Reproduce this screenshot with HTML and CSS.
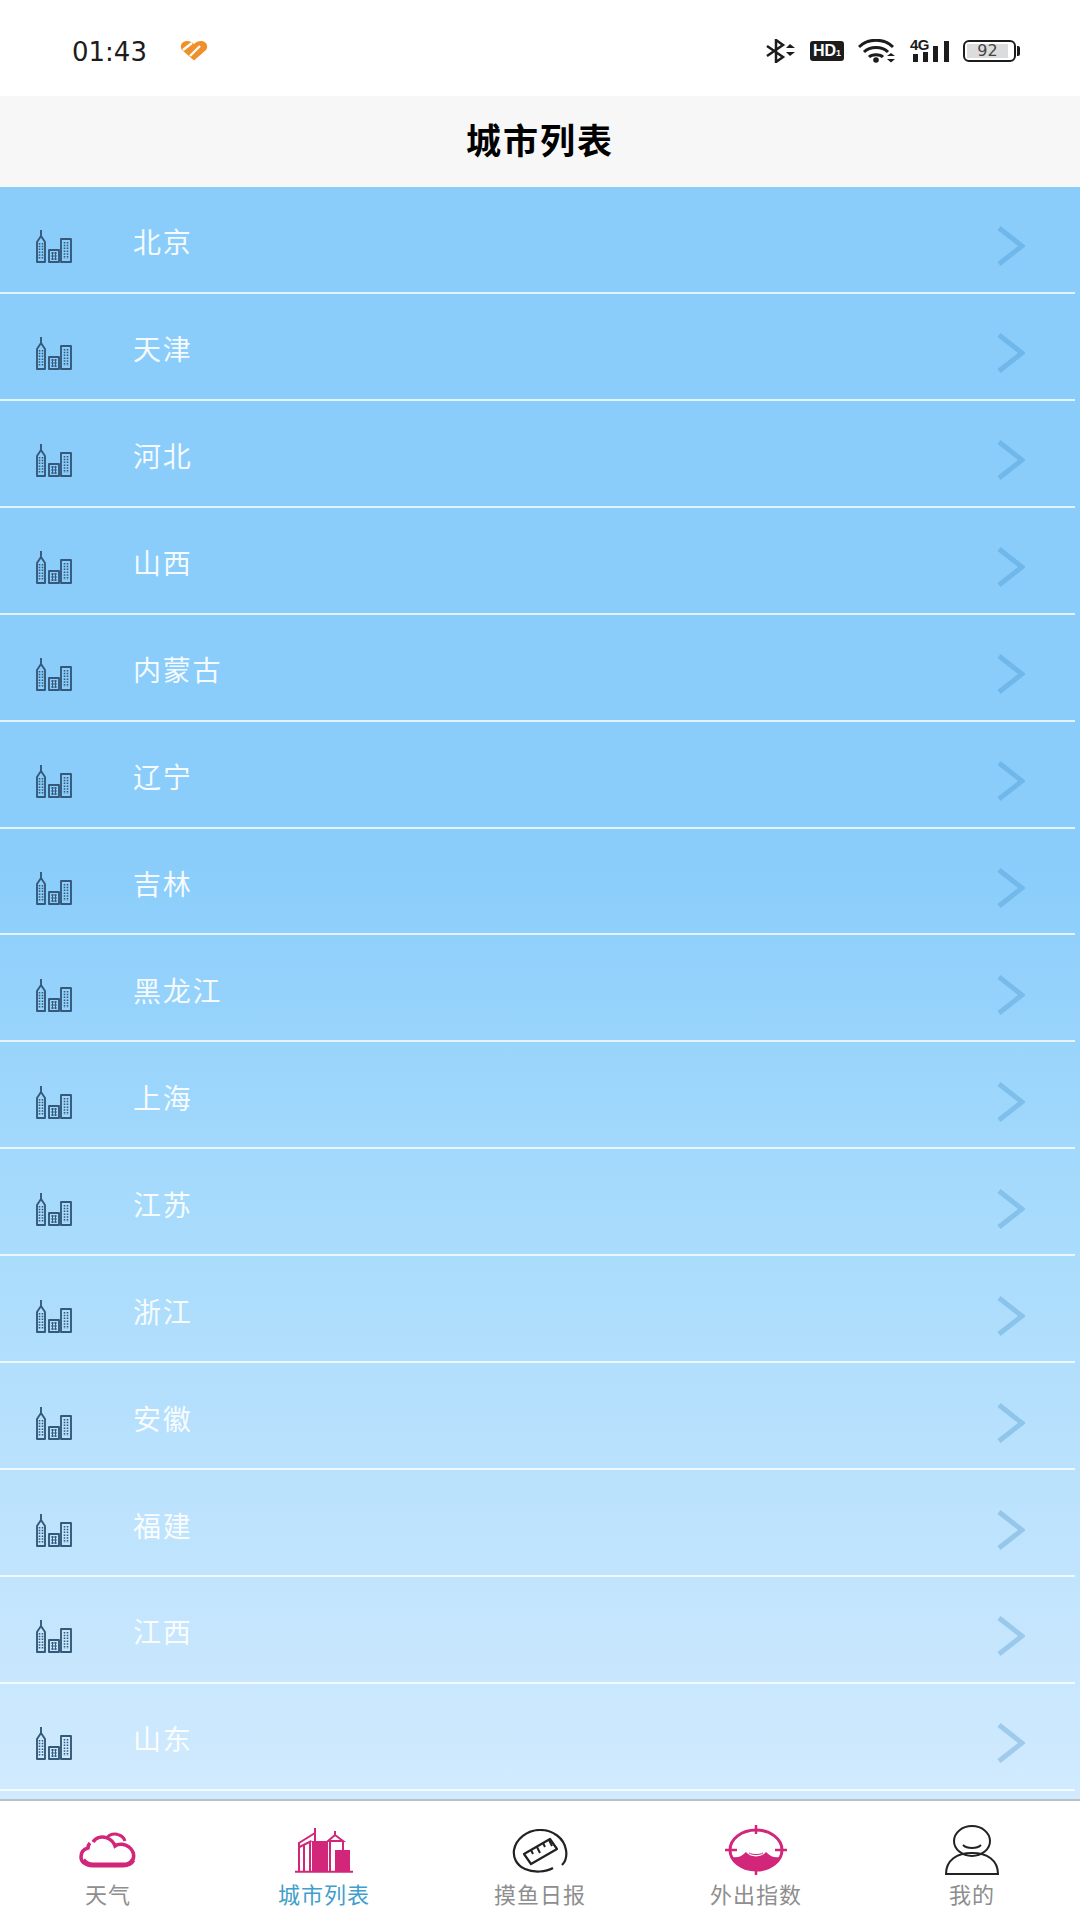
FILE: index.html
```html
<!DOCTYPE html>
<html lang="zh-CN">
<head>
    <meta charset="UTF-8">
    <meta name="viewport" content="width=device-width, initial-scale=1.0">
    <title>城市列表</title>
    <link rel="stylesheet" href="styles.css">
</head>
<body>
    <svg class="defs" width="0" height="0">
        <symbol id="city" viewBox="0 0 36 35">
            <path d="M5 1v6M1 33V13l4-6 4 6v20z M13 33V21h10v12z M25 33V10h10v23z" fill="none" stroke="#35597a" stroke-width="1.900" stroke-linejoin="round"/>
            <path d="M3.500 14v16M6.500 14v16M28.500 13v17M31.500 13v17" fill="none" stroke="#35597a" stroke-width="1.600" stroke-dasharray="1.500 1.300"/>
            <path d="M15 24h6M15 27h6M15 30h6M16.500 23v8M19.500 23v8" fill="none" stroke="#35597a" stroke-width="1"/>
        </symbol>
        <symbol id="chevron" viewBox="0 0 28 40">
            <path d="M2 2l23 18L2 38" fill="none" stroke="#3f8cc6" stroke-opacity=".32" stroke-width="5"/>
        </symbol>
    </svg>

    <div class="status-bar">
        <div class="status-left">
            <span class="time">01:43</span>
            <svg class="heart" width="28" height="20" viewBox="0 0 28 20">
                <path d="M14 19.500L2 9C-1 5 2 0 7 0c3 0 5 1 7 3 2-2 4-3 7-3 5 0 8 5 5 9z" fill="#f0902a"/>
                <path d="M3 9l9-7M10 15L20 5" stroke="#fff" stroke-width="2.400" fill="none"/>
            </svg>
        </div>
        <div class="status-right">
            <svg class="st-bt" width="30" height="24" viewBox="0 0 30 24">
                <path d="M1 7l16 11-7 5V1l7 5L1 17" fill="none" stroke="#1c1c1c" stroke-width="2.500"/>
                <path d="M20 9l4-4 5 4zM20 13h9l-5 4z" fill="#1c1c1c"/>
            </svg>
            <span class="hd">HD<small>1</small></span>
            <svg class="st-wifi" width="38" height="24" viewBox="0 0 38 24">
                <path d="M1 8c9-9 25-9 34 0M6 13c6-6 18-6 24 0M11 18c3-3 11-3 14 0" fill="none" stroke="#1c1c1c" stroke-width="3"/>
                <circle cx="18" cy="21" r="2.800" fill="#1c1c1c"/>
                <path d="M29 17l4-3 4 3zM29 20h8l-4 3.500z" fill="#1c1c1c"/>
            </svg>
            <div class="st-signal">
                <svg width="39" height="24" viewBox="0 0 39 24">
                    <path d="M3 15h5v8H3zM13 13h5v10h-5zM23 7h5v16h-5zM34 2h5v21h-5z" fill="#1c1c1c"/>
                </svg>
                <span class="net">4G</span>
            </div>
            <div class="battery"><span class="battery-level">92</span></div>
        </div>
    </div>

    <header class="title-bar">城市列表</header>

    <ul class="city-list">
        <li class="city-row"><svg class="city-icon"><use href="#city"/></svg><span class="city-name">北京</span><svg class="arrow"><use href="#chevron"/></svg></li>
        <li class="city-row"><svg class="city-icon"><use href="#city"/></svg><span class="city-name">天津</span><svg class="arrow"><use href="#chevron"/></svg></li>
        <li class="city-row"><svg class="city-icon"><use href="#city"/></svg><span class="city-name">河北</span><svg class="arrow"><use href="#chevron"/></svg></li>
        <li class="city-row"><svg class="city-icon"><use href="#city"/></svg><span class="city-name">山西</span><svg class="arrow"><use href="#chevron"/></svg></li>
        <li class="city-row"><svg class="city-icon"><use href="#city"/></svg><span class="city-name">内蒙古</span><svg class="arrow"><use href="#chevron"/></svg></li>
        <li class="city-row"><svg class="city-icon"><use href="#city"/></svg><span class="city-name">辽宁</span><svg class="arrow"><use href="#chevron"/></svg></li>
        <li class="city-row"><svg class="city-icon"><use href="#city"/></svg><span class="city-name">吉林</span><svg class="arrow"><use href="#chevron"/></svg></li>
        <li class="city-row"><svg class="city-icon"><use href="#city"/></svg><span class="city-name">黑龙江</span><svg class="arrow"><use href="#chevron"/></svg></li>
        <li class="city-row"><svg class="city-icon"><use href="#city"/></svg><span class="city-name">上海</span><svg class="arrow"><use href="#chevron"/></svg></li>
        <li class="city-row"><svg class="city-icon"><use href="#city"/></svg><span class="city-name">江苏</span><svg class="arrow"><use href="#chevron"/></svg></li>
        <li class="city-row"><svg class="city-icon"><use href="#city"/></svg><span class="city-name">浙江</span><svg class="arrow"><use href="#chevron"/></svg></li>
        <li class="city-row"><svg class="city-icon"><use href="#city"/></svg><span class="city-name">安徽</span><svg class="arrow"><use href="#chevron"/></svg></li>
        <li class="city-row"><svg class="city-icon"><use href="#city"/></svg><span class="city-name">福建</span><svg class="arrow"><use href="#chevron"/></svg></li>
        <li class="city-row"><svg class="city-icon"><use href="#city"/></svg><span class="city-name">江西</span><svg class="arrow"><use href="#chevron"/></svg></li>
        <li class="city-row"><svg class="city-icon"><use href="#city"/></svg><span class="city-name">山东</span><svg class="arrow"><use href="#chevron"/></svg></li>
    </ul>

    <nav class="tab-bar">
        <div class="tab">
            <div class="tab-icon">
                <svg class="icon-cloud" width="58" height="36" viewBox="0 0 58 36">
                    <path d="M14 10c3-5 9-6 14-4 5 2 7 5 8 8 4-3 10-2 14 1 5 4 6 10 3 14-2 3-5 4-9 4H12C6 33 2 30 2 25c0-5 3-8 7-9 0-2 1-4 2-5" fill="none" stroke="#d2267a" stroke-width="3.500"/>
                    <path d="M4 28c3 4 6 5 10 5h30c4 0 8-1 10-5" fill="none" stroke="#d2267a" stroke-width="5"/>
                    <path d="M28 6c2-4 8-5 12-3 3 1 5 3 6 6" fill="none" stroke="#d2267a" stroke-width="3"/>
                </svg>
            </div>
            <span class="tab-label">天气</span>
        </div>
        <div class="tab active">
            <div class="tab-icon">
                <svg width="58" height="46" viewBox="0 0 58 46">
                    <path d="M0 44.800h58" stroke="#d2267a" stroke-width="2"/>
                    <path d="M4 45V16l16-10M4.500 20l12-6M9 45V17M15 45V15" fill="none" stroke="#d2267a" stroke-width="2"/>
                    <path d="M20 1v13" stroke="#d2267a" stroke-width="2"/>
                    <path d="M17 14h16v31H17z" fill="#d2267a"/>
                    <path d="M33 14l7-6 8 6H33zM35 14v31M48 14v9M40 4v4" fill="none" stroke="#d2267a" stroke-width="2"/>
                    <path d="M40 23h15v22H40z" fill="#d2267a"/>
                </svg>
            </div>
            <span class="tab-label">城市列表</span>
        </div>
        <div class="tab">
            <div class="tab-icon">
                <svg width="56" height="44" viewBox="0 0 56 44">
                    <path d="M41 39C34 43 22 44 13 40 4 36 1 28 2 21 4 10 15 1 28 1c13 0 24 8 26 20 1 6-1 12-4 15" fill="none" stroke="#222" stroke-width="2.200"/>
                    <path d="M12 25L38 10l7 10-26 15z" fill="none" stroke="#222" stroke-width="2.200" stroke-linejoin="round"/>
                    <path d="M19 21l2 4M25 18l3 6M31 14l2 4M37 11l3 6" fill="none" stroke="#222" stroke-width="2"/>
                </svg>
            </div>
            <span class="tab-label">摸鱼日报</span>
        </div>
        <div class="tab">
            <div class="tab-icon">
                <svg class="icon-tall" width="62" height="50" viewBox="0 0 62 50">
                    <path d="M7 32q5 1 9-1 3-2 5-4 3 4 10 4.500 7-.5 10-4.500 2 2 5 4 4 2 9 1A26 20 0 0 1 7 32z" fill="#d2267a"/>
                    <ellipse cx="31" cy="25" rx="26" ry="20" fill="none" stroke="#d2267a" stroke-width="3"/>
                    <path d="M31 0v9M31 41v9M0 25h12M50 25h12" stroke="#d2267a" stroke-width="2.500"/>
                    <path d="M24 28c3 2 11 2 14 0" fill="none" stroke="#d2267a" stroke-width="1"/>
                </svg>
            </div>
            <span class="tab-label">外出指数</span>
        </div>
        <div class="tab">
            <div class="tab-icon">
                <svg class="icon-tall" width="54" height="50" viewBox="0 0 54 50">
                    <ellipse cx="27" cy="16" rx="18" ry="15" fill="none" stroke="#222" stroke-width="2"/>
                    <path d="M18 20c4 4 14 4 18 0" fill="none" stroke="#222" stroke-width="2"/>
                    <path d="M1 49c0-14 11-21 26-21s26 7 26 21z" fill="none" stroke="#222" stroke-width="2"/>
                </svg>
            </div>
            <span class="tab-label">我的</span>
        </div>
    </nav>
</body>
</html>
```

FILE: styles.css
```css
* {
    box-sizing: border-box;
}

body {
    margin: 0;
    width: 1080px;
    height: 1920px;
    display: flex;
    flex-direction: column;
    overflow: hidden;
    background-color: #fff;
    font-family: "Noto Sans CJK SC", "Noto Sans", sans-serif;
}

.defs {
    display: none;
}

.status-bar {
    height: 96px;
    flex-shrink: 0;
    display: flex;
    justify-content: space-between;
    align-items: flex-start;
    padding: 38px 60px 0 72px;
    color: #1c1c1c;
}

.status-left {
    display: flex;
    align-items: center;
    gap: 33px;
}

.time {
    font-family: "DejaVu Sans", sans-serif;
    font-size: 26px;
    line-height: 28px;
}

.heart {
    margin-top: -2px;
}

.status-right {
    display: flex;
    align-items: center;
    gap: 14px;
    height: 26px;
}

.hd {
    width: 34px;
    height: 20px;
    background-color: #1c1c1c;
    border-radius: 3px;
    color: #fff;
    font-family: "Liberation Sans", sans-serif;
    font-size: 16px;
    font-weight: bold;
    line-height: 20px;
    text-align: center;
}

.hd small {
    font-size: 9px;
}

.st-signal {
    position: relative;
    width: 39px;
    height: 24px;
}

.st-signal svg {
    display: block;
}

.net {
    position: absolute;
    left: 0;
    top: -1px;
    color: #1c1c1c;
    font-family: "Liberation Sans", sans-serif;
    font-size: 15px;
    font-weight: bold;
    line-height: 14px;
    letter-spacing: -0.5px;
}

.battery {
    width: 53px;
    height: 22px;
    border: 2px solid #1c1c1c;
    border-radius: 6px;
    padding: 2px 6px 2px 2px;
    margin-right: 4px;
    position: relative;
}

.battery::after {
    content: "";
    position: absolute;
    right: -6px;
    top: 4px;
    width: 3px;
    height: 10px;
    background-color: #1c1c1c;
    border-radius: 0 2px 2px 0;
}

.battery-level {
    display: block;
    height: 14px;
    background-color: #dcdcdc;
    color: #444;
    font-family: "DejaVu Sans", sans-serif;
    font-size: 16px;
    line-height: 14px;
    text-align: center;
}

.title-bar {
    height: 91px;
    flex-shrink: 0;
    background-color: #f7f7f7;
    color: #000;
    font-size: 35px;
    font-weight: bold;
    letter-spacing: 2px;
    line-height: 86px;
    text-align: center;
}

.city-list {
    flex: 1;
    margin: 0;
    padding: 0;
    list-style: none;
    overflow: hidden;
    background: linear-gradient(#8acdfb 0%, #8acdfb 42%, #a5dafc 62%, #d1eafe 100%);
}

.city-row {
    height: 106.93px;
    display: flex;
    align-items: center;
    padding: 10px 55px 0 36px;
    position: relative;
}

.city-row::after {
    content: "";
    position: absolute;
    left: 0;
    right: 5px;
    bottom: 0;
    height: 2px;
    background-color: rgba(255, 255, 255, 0.75);
}

.city-icon {
    width: 36px;
    height: 35px;
    margin-top: 3px;
    flex-shrink: 0;
}

.city-name {
    flex: 1;
    margin: -8px 0 0 61px;
    color: rgba(255, 255, 255, 0.92);
    font-size: 28px;
    letter-spacing: 1.800px;
    line-height: 36px;
}

.arrow {
    width: 28px;
    height: 40px;
    margin-top: 2px;
    flex-shrink: 0;
}

.tab-bar {
    height: 121px;
    flex-shrink: 0;
    display: grid;
    grid-template-columns: repeat(5, 1fr);
    background-color: #fff;
    border-top: 2px solid #b9c0c6;
}

.tab {
    display: flex;
    flex-direction: column;
    align-items: center;
}

.tab-icon {
    height: 72px;
    display: flex;
    align-items: flex-end;
}

.icon-cloud {
    margin-bottom: 5px;
}

.icon-tall {
    margin-bottom: -2px;
}

.tab-label {
    margin-top: 7px;
    color: #8e8e8e;
    font-size: 22px;
    letter-spacing: 1px;
    line-height: 26px;
}

.tab.active .tab-label {
    color: #3f9ecb;
}
```
